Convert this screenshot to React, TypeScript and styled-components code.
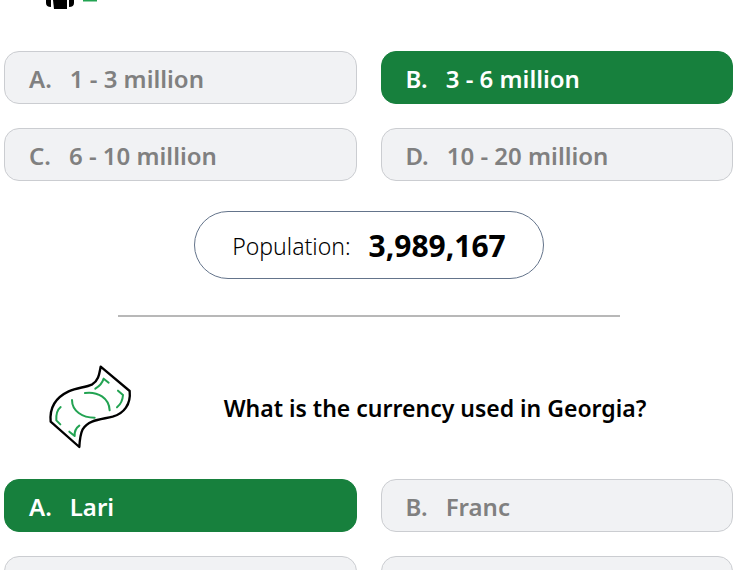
import React from "react";
import styled, { createGlobalStyle, css } from "styled-components";

const GlobalStyle = createGlobalStyle`
  * { box-sizing: border-box; }
  html, body { margin: 0; height: 100%; overflow: hidden; }
  body {
    background: #fff;
    color: #000;
    font-family: "Segoe UI", "Noto Sans", "Open Sans", sans-serif;
  }
`;

const Quiz = styled.main`
  display: flex;
  flex-direction: column;
  height: 100vh;
  overflow: hidden;

  > * { flex-shrink: 0; }
`;

const QuestionFoot = styled.div`
  padding: 0 46px 42px;
  line-height: 0;
`;

const QuestionHead = styled.header`
  display: flex;
  align-items: center;
  padding: 38px 8px 24px 40px;
`;

const QuestionTitle = styled.h2`
  flex: 1;
  margin: 0;
  padding-top: 5px;
  text-align: center;
  font-size: 23px;
  line-height: 32px;
  font-weight: 600;
`;

const Answers = styled.div`
  display: grid;
  grid-template-columns: 1fr 1fr;
  gap: 24px;
  padding: 0 5px 0 4px;
`;

const AnswerButton = styled.button<{ $correct?: boolean }>`
  display: flex;
  align-items: center;
  gap: 18px;
  min-height: 53px;
  padding: 3px 24px 0;
  border: 1px solid #cbcdd1;
  border-radius: 15px;
  background: #f1f2f4;
  color: #808080;
  font-family: inherit;
  font-size: 24px;
  line-height: 32px;
  font-weight: 600;
  text-align: left;
  cursor: pointer;
  ${({ $correct }) =>
    $correct &&
    css`
      border-color: #17803d;
      background: #17803d;
      color: #fff;
    `}
`;

const Fact = styled.p`
  display: flex;
  align-items: center;
  align-self: center;
  gap: 18px;
  margin: 30px 0 36px;
  padding: 15px 37px 13px;
  border: 1px solid #64748b;
  border-radius: 34px;
  font-size: 23px;
  line-height: 38px;
`;

const FactLabel = styled.span`
  font-weight: 300;
`;

const FactValue = styled.strong`
  font-size: 30px;
  font-weight: 700;
`;

const Divider = styled.hr`
  width: 68%;
  height: 2px;
  margin: 0 auto;
  border: 0;
  background: #b8b8b8;
`;

type Answer = { letter: string; text: string; correct?: boolean };

const populationAnswers: Answer[] = [
  { letter: "A.", text: "1 - 3 million" },
  { letter: "B.", text: "3 - 6 million", correct: true },
  { letter: "C.", text: "6 - 10 million" },
  { letter: "D.", text: "10 - 20 million" },
];

const currencyAnswers: Answer[] = [
  { letter: "A.", text: "Lari", correct: true },
  { letter: "B.", text: "Franc" },
  { letter: "", text: "" },
  { letter: "", text: "" },
];

function PeopleIcon() {
  return (
    <svg width="54" height="9" viewBox="0 0 54 9" aria-hidden="true">
      <path d="M0 0H5V7Q0 7 0 3Z" fill="#000" />
      <path d="M7 0H21V9H8Z" fill="#000" />
      <path d="M23 0H28V3Q28 7 23 7Z" fill="#000" />
      <path d="M37 0H51V1.5H37Z" fill="#22a352" />
    </svg>
  );
}

function BanknoteIcon() {
  return (
    <svg width="100" height="100" viewBox="0 0 300 300" fill="none" aria-hidden="true">
      <path
        d="M182 35L269 108C273 148 252 176 218 185C180 194 146 194 128 223C121 238 119 256 118 276L32 200C28 157 50 126 86 109C112 97 136 98 157 88C177 75 178 55 182 35Z"
        stroke="#000"
        strokeWidth="7"
        strokeLinejoin="round"
      />
      <g stroke="#22a352" strokeWidth="6" strokeLinecap="round" strokeLinejoin="round">
        <path d="M135 114C174 109 207 129 209 166" />
        <path d="M96 135C96 168 127 188 164 188" />
        <path d="M206 83L191 71C187 84 178 94 166 101" />
        <path d="M234 107L249 120C248 136 242 148 231 157" />
        <path d="M62 156C52 164 48 179 49 196L61 208" />
        <path d="M118 212C108 219 103 229 104 243L88 230" />
      </g>
    </svg>
  );
}

function AnswerList({ answers }: { answers: Answer[] }) {
  return (
    <Answers>
      {answers.map(({ letter, text, correct }, index) => (
        <AnswerButton key={index} type="button" $correct={correct}>
          <span>{letter}</span>
          <span>{text}</span>
        </AnswerButton>
      ))}
    </Answers>
  );
}

export default function App() {
  return (
    <>
      <GlobalStyle />
      <Quiz>
        <QuestionFoot>
          <PeopleIcon />
        </QuestionFoot>
        <AnswerList answers={populationAnswers} />
        <Fact>
          <FactLabel>Population:</FactLabel>
          <FactValue>3,989,167</FactValue>
        </Fact>
        <Divider />
        <QuestionHead>
          <BanknoteIcon />
          <QuestionTitle>What is the currency used in Georgia?</QuestionTitle>
        </QuestionHead>
        <AnswerList answers={currencyAnswers} />
      </Quiz>
    </>
  );
}
